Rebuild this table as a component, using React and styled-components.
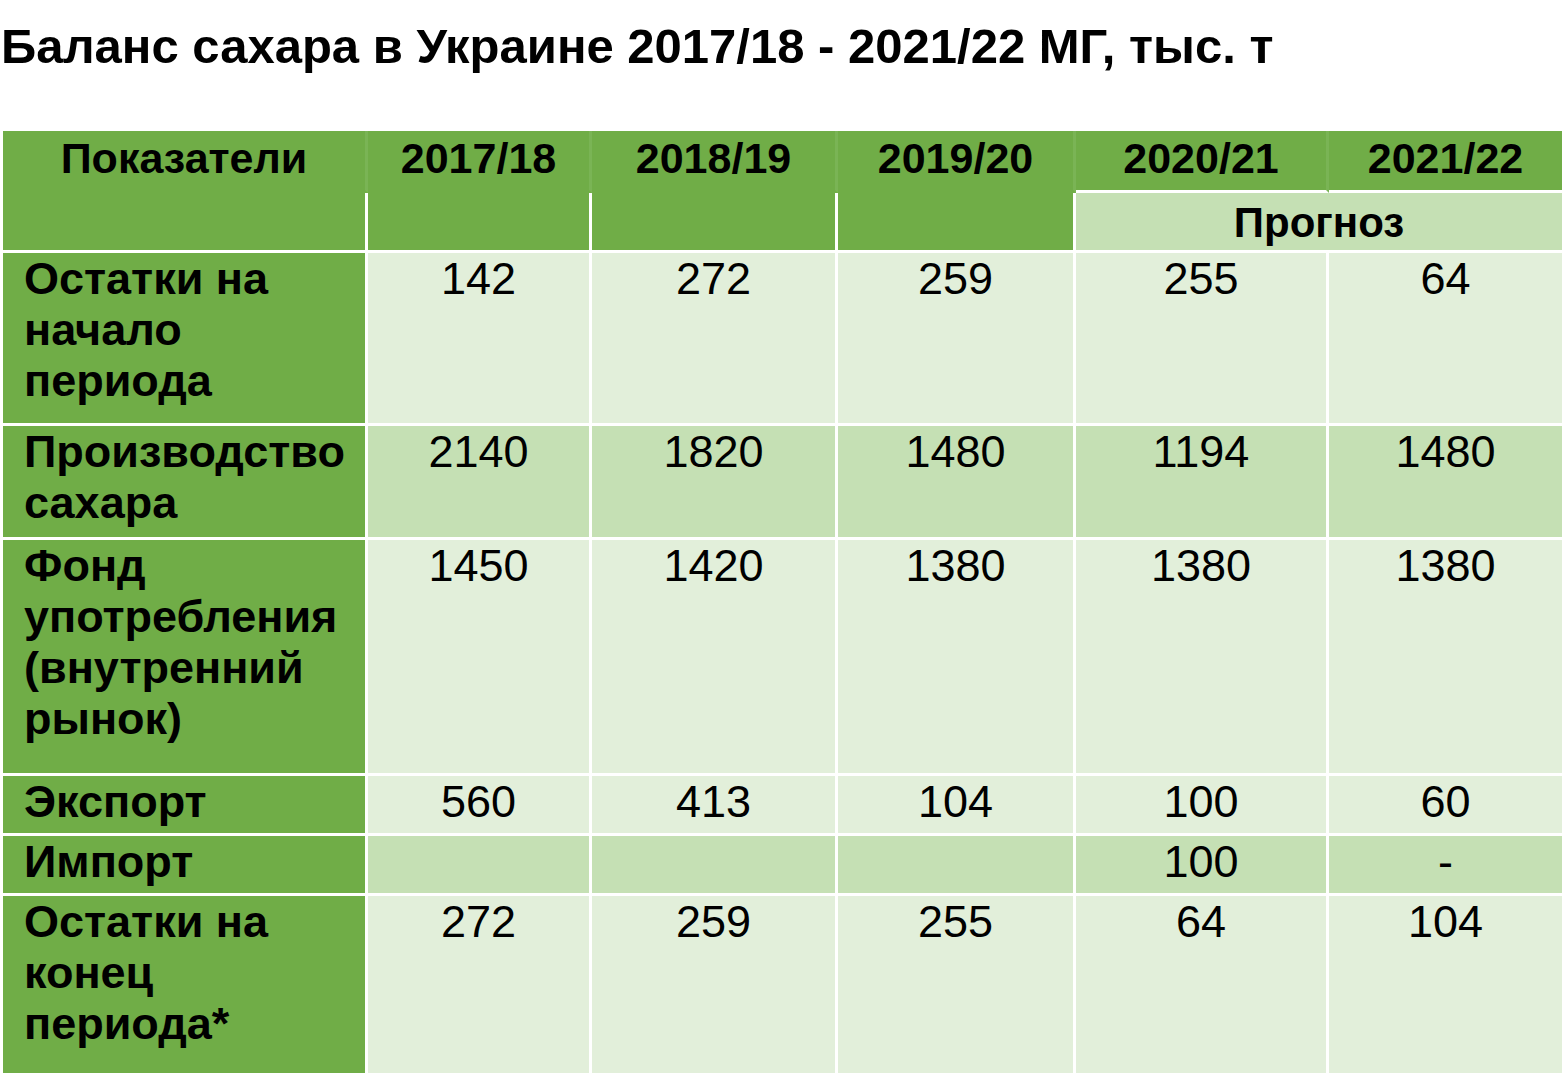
import React from 'react';
import styled, { createGlobalStyle } from 'styled-components';

const GlobalStyle = createGlobalStyle`
  html, body {
    margin: 0;
    padding: 0;
    background: #ffffff;
  }
  body {
    font-family: "Liberation Sans", Arial, sans-serif;
    color: #000;
    overflow: hidden;
  }
`;

const DARK = '#70AD47';
const MID = '#C5E0B4';
const LIGHT = '#E2EFDA';
const FAINT = '#7AB455';
const LINE = '#ffffff';

const years = ['2017/18', '2018/19', '2019/20', '2020/21', '2021/22'];

const rows = [
  { label: ['Остатки на', 'начало', 'периода'], values: ['142', '272', '259', '255', '64'], bg: LIGHT },
  { label: ['Производство', 'сахара'], values: ['2140', '1820', '1480', '1194', '1480'], bg: MID },
  { label: ['Фонд', 'употребления', '(внутренний', 'рынок)'], values: ['1450', '1420', '1380', '1380', '1380'], bg: LIGHT },
  { label: ['Экспорт'], values: ['560', '413', '104', '100', '60'], bg: LIGHT },
  { label: ['Импорт'], values: ['', '', '', '100', '-'], bg: MID },
  { label: ['Остатки на', 'конец', 'периода*'], values: ['272', '259', '255', '64', '104'], bg: LIGHT },
];

const Page = styled.div`
  padding: 0 0 0 3px;
`;

const Title = styled.h1`
  margin: 0 0 0 -2px;
  padding-top: 18px;
  font-size: 49px;
  line-height: 56px;
  font-weight: 700;
  white-space: nowrap;
`;

const Table = styled.div`
  display: grid;
  grid-template-columns: 365px 224px 246px 238px 253px 233px;
  grid-template-rows: 62px 60px 173px 114px 236px 60px 60px 177px;
  margin-top: 57px;
`;

const Cell = styled.div`
  box-sizing: border-box;
  background: ${(p) => p.$bg};
  border-right: ${(p) => (p.$right ? `3px solid ${p.$right}` : 'none')};
  border-bottom: ${(p) => (p.$bottom ? `3px solid ${p.$bottom}` : 'none')};
  grid-column: ${(p) => (p.$cols ? `span ${p.$cols}` : 'auto')};
  padding-top: ${(p) => p.$pt || 0}px;
  padding-left: ${(p) => p.$pl || 0}px;
  text-align: ${(p) => p.$align || 'center'};
  font-size: ${(p) => p.$size || 45}px;
  line-height: 51px;
  font-weight: ${(p) => (p.$bold ? 700 : 400)};
  white-space: nowrap;
`;

export default function App() {
  return (
    <Page>
      <GlobalStyle />
      <Title>Баланс сахара в Украине 2017/18 - 2021/22 МГ, тыс. т</Title>
      <Table>
        <Cell $bg={DARK} $right={FAINT} $bottom={DARK} $bold $size={43} $pt={2}>
          Показатели
        </Cell>
        {years.map((y, i) => (
          <Cell
            key={y}
            $bg={DARK}
            $right={i < 4 ? FAINT : null}
            $bottom={i < 3 ? DARK : LINE}
            $bold
            $size={43}
            $pt={2}
          >
            {y}
          </Cell>
        ))}
        {[0, 1, 2, 3].map((i) => (
          <Cell key={i} $bg={DARK} $right={LINE} $bottom={LINE} />
        ))}
        <Cell $bg={MID} $cols={2} $bottom={LINE} $bold $size={42} $pt={4}>
          Прогноз
        </Cell>

        {rows.map((r, ri) => {
          const last = ri === rows.length - 1;
          return (
            <React.Fragment key={ri}>
              <Cell $bg={DARK} $right={LINE} $bottom={last ? null : LINE} $align="left" $pl={21} $bold>
                {r.label.map((line, li) => (
                  <div key={li}>{line}</div>
                ))}
              </Cell>
              {r.values.map((v, vi) => (
                <Cell
                  key={vi}
                  $bg={r.bg}
                  $right={vi < 4 ? LINE : null}
                  $bottom={last ? null : LINE}
                >
                  {v}
                </Cell>
              ))}
            </React.Fragment>
          );
        })}
      </Table>
    </Page>
  );
}
